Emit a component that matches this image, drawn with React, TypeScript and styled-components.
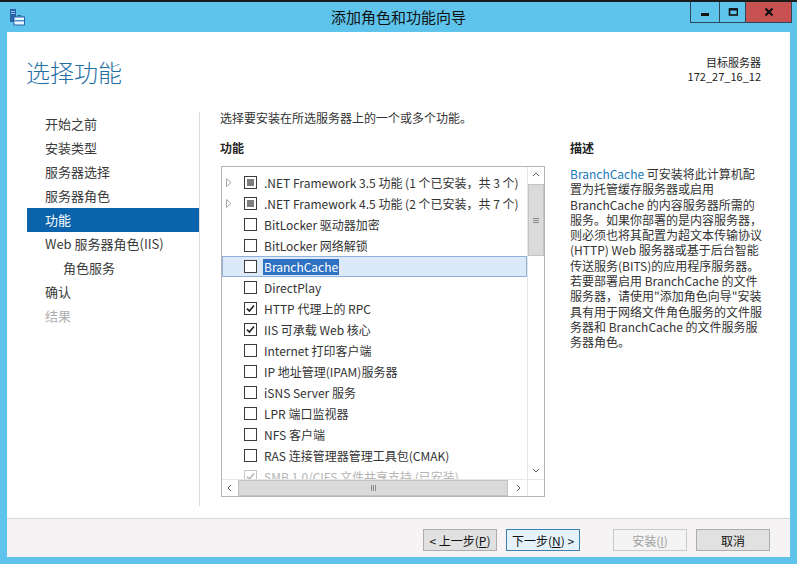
import React from 'react';
import styled, { createGlobalStyle } from 'styled-components';

const GlobalStyle = createGlobalStyle`
  html, body {
    margin: 0;
    padding: 0;
    background: #fff;
  }
  body {
    font-family: "Noto Sans CJK SC", "Noto Sans", sans-serif;
    font-size: 12px;
    color: #333;
  }
  * {
    box-sizing: border-box;
  }
`;

const FRAME = '#5ec4ec';

const Window = styled.div`
  width: 797px;
  height: 564px;
  background: ${FRAME};
  border-top: 2px solid #1b1b1b;
  padding: 0 7px 7px;
  display: flex;
  flex-direction: column;
  overflow: hidden;
`;

const TitleBar = styled.div`
  height: 30px;
  margin: 0 -7px;
  display: grid;
  grid-template-columns: 1fr auto 1fr;
  align-items: start;
`;

const AppIcon = styled.svg`
  margin: 7px 0 0 9px;
  justify-self: start;
`;

const TitleText = styled.div`
  font-size: 15px;
  line-height: 30px;
  color: #111;
`;

const Controls = styled.div`
  justify-self: end;
  margin-right: 5px;
  display: flex;
`;

const CtrlButton = styled.div<{ $w: number; $close?: boolean }>`
  width: ${(p) => p.$w}px;
  height: 21px;
  margin-left: -1px;
  border: 1px solid #2d4658;
  border-top: none;
  background: ${(p) => (p.$close ? '#c75050' : 'transparent')};
  display: flex;
  align-items: center;
  justify-content: center;
`;

const Client = styled.div`
  flex: 1;
  background: #fff;
  display: flex;
  flex-direction: column;
`;

const Header = styled.div`
  height: 78px;
  display: flex;
  justify-content: space-between;
  align-items: flex-start;
  padding: 23px 29px 0 19px;
`;

const PageTitle = styled.h1`
  margin: 1px 0 0;
  font-size: 24px;
  line-height: 32px;
  font-weight: 300;
  color: #1f6fa2;
`;

const ServerInfo = styled.div`
  text-align: right;
  font-size: 11px;
  line-height: 14px;
  color: #222;
`;

const Body = styled.div`
  height: 408px;
  display: flex;
`;

const Nav = styled.div`
  width: 192px;
  padding-top: 2px;
  display: flex;
  flex-direction: column;
`;

const NavItem = styled.div<{ $active?: boolean; $disabled?: boolean; $indent?: boolean }>`
  height: 24px;
  line-height: 24px;
  margin-left: 20px;
  padding-left: ${(p) => (p.$indent ? 36 : 18)}px;
  font-size: 13px;
  background: ${(p) => (p.$active ? '#0b64ab' : 'transparent')};
  color: ${(p) => (p.$active ? '#fff' : p.$disabled ? '#b0b0b0' : '#3a3a3a')};
  white-space: nowrap;
`;

const Divider = styled.div`
  width: 1px;
  background: #dcdcdc;
  margin: 2px 0 12px;
`;

const Main = styled.div`
  flex: 1;
  padding: 0 15px 0 20px;
  display: flex;
  flex-direction: column;
`;

const Intro = styled.div`
  line-height: 16px;
  color: #333;
`;

const Columns = styled.div`
  margin-top: 14px;
  display: flex;
  gap: 25px;
`;

const FeatureCol = styled.div`
  width: 325px;
  display: flex;
  flex-direction: column;
`;

const DescCol = styled.div`
  flex: 1;
  display: flex;
  flex-direction: column;
`;

const SectionHead = styled.div`
  font-weight: 700;
  line-height: 16px;
  color: #222;
  margin-bottom: 10px;
`;

const ListBox = styled.div`
  margin-left: 1px;
  width: 324px;
  height: 331px;
  border: 1px solid #b4b4b4;
  display: grid;
  grid-template-columns: 1fr 17px;
  grid-template-rows: 1fr 17px;
`;

const ListView = styled.div`
  overflow: hidden;
  padding-top: 5px;
`;

const Row = styled.div<{ $selected?: boolean }>`
  height: 21px;
  display: flex;
  align-items: center;
  border: 1px solid ${(p) => (p.$selected ? '#8fb0dc' : 'transparent')};
  background: ${(p) => (p.$selected ? '#dce9f8' : 'transparent')};
  white-space: nowrap;
`;

const Expander = styled.span`
  width: 21px;
  padding-left: 3px;
  display: flex;
  align-items: center;
  flex-shrink: 0;
`;

const Check = styled.span<{ $disabled?: boolean }>`
  width: 13px;
  height: 13px;
  flex-shrink: 0;
  border: 1px solid ${(p) => (p.$disabled ? '#c4c4c4' : '#3c3c3c')};
  background: #fff;
  display: flex;
  align-items: center;
  justify-content: center;
`;

const Partial = styled.span`
  width: 7px;
  height: 7px;
  background: #7d7d7d;
`;

const RowLabel = styled.span<{ $selected?: boolean; $disabled?: boolean }>`
  margin-left: 6px;
  padding: 0 1px;
  line-height: 16px;
  color: ${(p) => (p.$selected ? '#fff' : p.$disabled ? '#b4b4b4' : '#333')};
  background: ${(p) => (p.$selected ? '#2f71c3' : 'transparent')};
`;

const VScroll = styled.div`
  border-left: 1px solid #e6e6e6;
  display: flex;
  flex-direction: column;
`;

const HScroll = styled.div`
  border-top: 1px solid #e6e6e6;
  display: flex;
`;

const Corner = styled.div`
  border-top: 1px solid #e6e6e6;
  border-left: 1px solid #e6e6e6;
`;

const ArrowBtn = styled.div`
  width: 16px;
  height: 16px;
  flex-shrink: 0;
  display: flex;
  align-items: center;
  justify-content: center;
`;

const Thumb = styled.div<{ $horizontal?: boolean }>`
  background: #dadada;
  border: 1px solid #c3c3c3;
  display: flex;
  flex-direction: ${(p) => (p.$horizontal ? 'row' : 'column')};
  align-items: center;
  justify-content: center;
  gap: 1px;
  ${(p) => (p.$horizontal ? 'width: 270px; margin: 0 2px 0 0;' : 'height: 72px; margin: 1px 0 0;')}
`;

const Grip = styled.span<{ $horizontal?: boolean }>`
  background: #8a8a8a;
  ${(p) => (p.$horizontal ? 'width: 1px; height: 6px;' : 'width: 6px; height: 1px;')}
`;

const Track = styled.div`
  flex: 1;
`;

const DescText = styled.div`
  line-height: 15.3px;
  color: #333;
`;

const DescLine = styled.div`
  white-space: nowrap;
`;

const Term = styled.span`
  color: #1979b8;
`;

const Footer = styled.div`
  flex: 1;
  border-top: 1px solid #d6d6d6;
  background: #f5f3f3;
  display: flex;
  justify-content: flex-end;
  align-items: flex-start;
  padding: 10px 20px 0;
  gap: 9px;
`;

const Button = styled.div<{ $variant?: 'focus' | 'disabled'; $gapBefore?: number }>`
  width: 74px;
  height: 22px;
  display: flex;
  align-items: center;
  justify-content: center;
  font-size: 12px;
  margin-left: ${(p) => p.$gapBefore ?? 0}px;
  border: 1px solid
    ${(p) => (p.$variant === 'focus' ? '#3c7fb1' : p.$variant === 'disabled' ? '#c9c9c9' : '#adadad')};
  background: ${(p) => (p.$variant === 'focus' ? '#e5f1fb' : p.$variant === 'disabled' ? '#f4f4f4' : '#e1e1e1')};
  color: ${(p) => (p.$variant === 'disabled' ? '#a0a0a0' : '#111')};
  white-space: nowrap;

  u {
    text-decoration: underline;
  }
`;

type CheckState = 'off' | 'on' | 'partial';

type Feature = {
  label: string;
  state?: CheckState;
  expandable?: boolean;
  selected?: boolean;
  disabled?: boolean;
};

const features: Feature[] = [
  { label: '.NET Framework 3.5 功能 (1 个已安装，共 3 个)', state: 'partial', expandable: true },
  { label: '.NET Framework 4.5 功能 (2 个已安装，共 7 个)', state: 'partial', expandable: true },
  { label: 'BitLocker 驱动器加密' },
  { label: 'BitLocker 网络解锁' },
  { label: 'BranchCache', selected: true },
  { label: 'DirectPlay' },
  { label: 'HTTP 代理上的 RPC', state: 'on' },
  { label: 'IIS 可承载 Web 核心', state: 'on' },
  { label: 'Internet 打印客户端' },
  { label: 'IP 地址管理(IPAM)服务器' },
  { label: 'iSNS Server 服务' },
  { label: 'LPR 端口监视器' },
  { label: 'NFS 客户端' },
  { label: 'RAS 连接管理器管理工具包(CMAK)' },
  { label: 'SMB 1.0/CIFS 文件共享支持 (已安装)', state: 'on', disabled: true },
];

const navItems = [
  { label: '开始之前' },
  { label: '安装类型' },
  { label: '服务器选择' },
  { label: '服务器角色' },
  { label: '功能', active: true },
  { label: 'Web 服务器角色(IIS)' },
  { label: '角色服务', indent: true },
  { label: '确认' },
  { label: '结果', disabled: true },
];

const descLines: React.ReactNode[] = [
  <><Term>BranchCache</Term> 可安装将此计算机配</>,
  '置为托管缓存服务器或启用',
  'BranchCache 的内容服务器所需的',
  '服务。如果你部署的是内容服务器，',
  '则必须也将其配置为超文本传输协议',
  '(HTTP) Web 服务器或基于后台智能',
  '传送服务(BITS)的应用程序服务器。',
  '若要部署启用 BranchCache 的文件',
  '服务器，请使用"添加角色向导"安装',
  '具有用于网络文件角色服务的文件服',
  '务器和 BranchCache 的文件服务服',
  '务器角色。',
];

const Chevron = ({ dir }: { dir: 'up' | 'down' | 'left' | 'right' }) => {
  const d = {
    up: 'M1 5 L4 2 L7 5',
    down: 'M1 2 L4 5 L7 2',
    left: 'M5 1 L2 4 L5 7',
    right: 'M2 1 L5 4 L2 7',
  }[dir];
  return (
    <svg width="8" height="8" viewBox="0 0 8 8">
      <path d={d} fill="none" stroke="#606060" strokeWidth="1" />
    </svg>
  );
};

const CheckBox = ({ state, disabled }: { state: CheckState; disabled?: boolean }) => (
  <Check $disabled={disabled}>
    {state === 'partial' && <Partial />}
    {state === 'on' && (
      <svg width="11" height="11" viewBox="0 0 11 11">
        <path
          d="M2 5.6 L4.4 8 L9 2.6"
          fill="none"
          stroke={disabled ? '#b8b8b8' : '#1e1e1e'}
          strokeWidth="1.6"
        />
      </svg>
    )}
  </Check>
);

const FeatureRow = ({ item }: { item: Feature }) => (
  <Row $selected={item.selected}>
    <Expander>
      {item.expandable && (
        <svg width="6" height="9" viewBox="0 0 6 9">
          <path d="M0.5 0.5 L5 4.5 L0.5 8.5 Z" fill="none" stroke="#a8a8a8" />
        </svg>
      )}
    </Expander>
    <CheckBox state={item.state ?? 'off'} disabled={item.disabled} />
    <RowLabel $selected={item.selected} $disabled={item.disabled}>
      {item.label}
    </RowLabel>
  </Row>
);

const ServerManagerIcon = () => (
  <AppIcon width="16" height="17" viewBox="0 0 16 17">
    <rect x="1" y="0" width="6" height="13" fill="#2a63a8" />
    <rect x="2" y="2" width="4" height="1" fill="#8fc3ee" />
    <rect x="2" y="4" width="4" height="1" fill="#8fc3ee" />
    <rect x="5" y="8" width="10.5" height="8" fill="#eaf4fb" stroke="#2a63a8" />
    <path d="M8.5 8 V6.5 H12 V8" fill="none" stroke="#2a63a8" />
    <rect x="6" y="11" width="9" height="1.4" fill="#3f89c9" />
  </AppIcon>
);

const App = () => (
  <>
    <GlobalStyle />
    <Window>
      <TitleBar>
        <ServerManagerIcon />
        <TitleText>添加角色和功能向导</TitleText>
        <Controls>
          <CtrlButton $w={30}>
            <svg width="10" height="10" viewBox="0 0 10 10">
              <rect x="1" y="6" width="8" height="3" fill="#111" />
            </svg>
          </CtrlButton>
          <CtrlButton $w={27}>
            <svg width="10" height="10" viewBox="0 0 10 10">
              <rect x="1.5" y="2" width="8" height="6" fill="none" stroke="#111" strokeWidth="1.6" />
              <rect x="1" y="1.5" width="9" height="2" fill="#111" />
            </svg>
          </CtrlButton>
          <CtrlButton $w={47} $close>
            <svg width="10" height="10" viewBox="0 0 10 10">
              <path d="M1.5 1.5 L8.5 8.5 M8.5 1.5 L1.5 8.5" stroke="#111" strokeWidth="2.2" />
            </svg>
          </CtrlButton>
        </Controls>
      </TitleBar>

      <Client>
        <Header>
          <PageTitle>选择功能</PageTitle>
          <ServerInfo>
            <div>目标服务器</div>
            <div>172_27_16_12</div>
          </ServerInfo>
        </Header>

        <Body>
          <Nav>
            {navItems.map((n) => (
              <NavItem key={n.label} $active={n.active} $disabled={n.disabled} $indent={n.indent}>
                {n.label}
              </NavItem>
            ))}
          </Nav>
          <Divider />
          <Main>
            <Intro>选择要安装在所选服务器上的一个或多个功能。</Intro>
            <Columns>
              <FeatureCol>
                <SectionHead>功能</SectionHead>
                <ListBox>
                  <ListView>
                    {features.map((f) => (
                      <FeatureRow key={f.label} item={f} />
                    ))}
                  </ListView>
                  <VScroll>
                    <ArrowBtn>
                      <Chevron dir="up" />
                    </ArrowBtn>
                    <Thumb>
                      <Grip />
                      <Grip />
                      <Grip />
                    </Thumb>
                    <Track />
                    <ArrowBtn>
                      <Chevron dir="down" />
                    </ArrowBtn>
                  </VScroll>
                  <HScroll>
                    <ArrowBtn>
                      <Chevron dir="left" />
                    </ArrowBtn>
                    <Thumb $horizontal>
                      <Grip $horizontal />
                      <Grip $horizontal />
                      <Grip $horizontal />
                    </Thumb>
                    <Track />
                    <ArrowBtn>
                      <Chevron dir="right" />
                    </ArrowBtn>
                  </HScroll>
                  <Corner />
                </ListBox>
              </FeatureCol>
              <DescCol>
                <SectionHead>描述</SectionHead>
                <DescText>
                  {descLines.map((line, i) => (
                    <DescLine key={i}>{line}</DescLine>
                  ))}
                </DescText>
              </DescCol>
            </Columns>
          </Main>
        </Body>

        <Footer>
          <Button>
            &lt; 上一步(<u>P</u>)
          </Button>
          <Button $variant="focus">
            下一步(<u>N</u>) &gt;
          </Button>
          <Button $variant="disabled" $gapBefore={24}>
            安装(<u>I</u>)
          </Button>
          <Button>取消</Button>
        </Footer>
      </Client>
    </Window>
  </>
);

export default App;
